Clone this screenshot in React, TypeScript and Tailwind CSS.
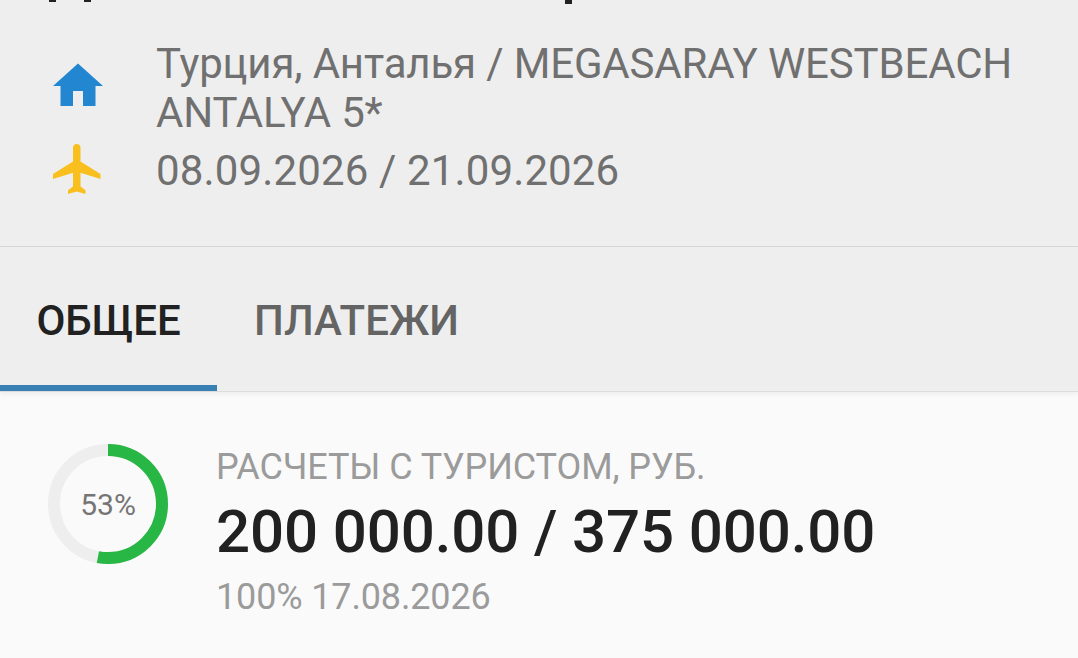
import { ReactNode } from "react";
import { MdHome, MdFlight } from "react-icons/md";

const TABS = [
  { id: "general", label: "ОБЩЕЕ" },
  { id: "payments", label: "ПЛАТЕЖИ" },
];

const InfoRow = ({ icon, children }: { icon: ReactNode; children: ReactNode }) => (
  <div className="flex items-center">
    <div className="w-[156px] shrink-0 pl-12">{icon}</div>
    {children}
  </div>
);

const ProgressRing = ({ percent }: { percent: number }) => (
  <div className="relative size-[120px] shrink-0">
    <svg viewBox="0 0 120 120" className="size-full -rotate-90">
      <circle cx="60" cy="60" r="54" fill="none" stroke="#eeeeee" strokeWidth="12" />
      <circle
        cx="60"
        cy="60"
        r="54"
        fill="none"
        stroke="#28b745"
        strokeWidth="12"
        pathLength={100}
        strokeDasharray={`${percent} 100`}
      />
    </svg>
    <span className="absolute inset-0 flex items-center justify-center pt-0.5 text-[30px] leading-none text-[#757575]">
      {percent}%
    </span>
  </div>
);

export default function App() {
  const activeTab = "general";

  return (
    <div className="flex h-[658px] w-[1078px] flex-col overflow-hidden bg-[#fafafa] font-['Roboto',sans-serif]">
      <header className="h-[247px] border-b border-[#d8d8d8] bg-[#eeeeee]">
        {/* Lower edge of the heading that is scrolled out of view */}
        <svg viewBox="0 0 1078 39" className="h-[39px] w-full" fill="#212121">
          <rect x="49" y="0" width="7" height="2" />
          <rect x="84" y="0" width="7" height="2" />
          <rect x="565" y="0" width="7" height="4" />
        </svg>
        <InfoRow icon={<MdHome className="mb-1 size-[60px] text-[#2386d1]" />}>
          <p className="text-[42px] leading-[49px] tracking-[-0.16px] text-[#707070]">
            Турция, Анталья / MEGASARAY WESTBEACH ANTALYA 5*
          </p>
        </InfoRow>
        <div className="mt-0.5">
          <InfoRow icon={<MdFlight className="size-[60px] text-[#f9bf1e]" />}>
            <p className="pt-0.5 text-[42px] leading-[49px] tracking-[0.14px] text-[#707070]">
              08.09.2026 / 21.09.2026
            </p>
          </InfoRow>
        </div>
      </header>

      <nav className="relative flex h-[145px] border-b border-[#dcdcdc] bg-[#eeeeee] shadow-[0_2px_5px_rgba(0,0,0,0.06)]">
        {TABS.map((tab) => (
          <button
            key={tab.id}
            className={
              tab.id === activeTab
                ? "w-[217px] border-b-6 border-[#3880b4] pt-2 text-[42px] font-medium tracking-[-0.1px] text-[#212121]"
                : "border-b-6 border-transparent px-[37px] pt-2 text-[42px] font-medium tracking-[0.1px] text-[#646464]"
            }
          >
            {tab.label}
          </button>
        ))}
      </nav>

      <main className="flex gap-12 px-12 pt-[52px]">
        <ProgressRing percent={53} />
        <div className="pt-px">
          <div className="text-[36px] leading-[44px] tracking-[-0.1px] text-[#9b9b9b]">РАСЧЕТЫ С ТУРИСТОМ, РУБ.</div>
          <div className="text-[60px] leading-[86px] font-medium tracking-[-0.12px] text-[#212121]">200 000.00 / 375 000.00</div>
          <div className="text-[36px] leading-[44px] tracking-[-0.15px] text-[#9b9b9b]">100% 17.08.2026</div>
        </div>
      </main>
    </div>
  );
}
